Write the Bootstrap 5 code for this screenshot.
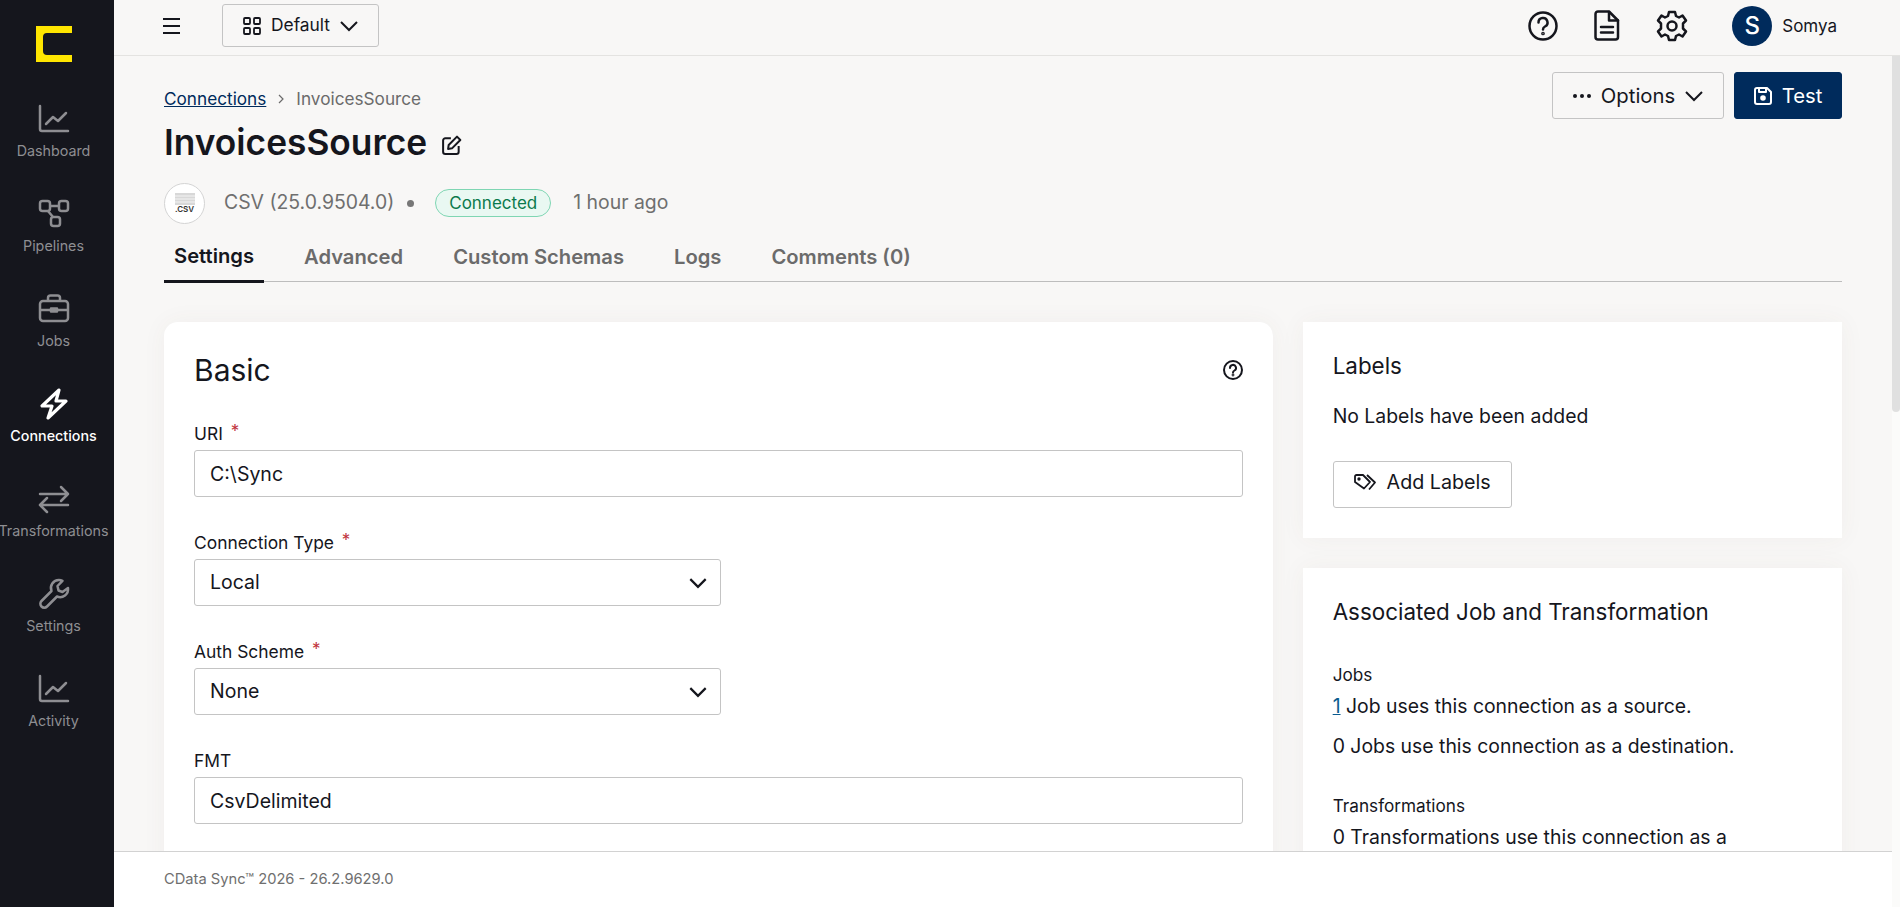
<!DOCTYPE html>
<html lang="en">
<head>
<meta charset="utf-8">
<title>InvoicesSource</title>
<link rel="stylesheet" href="https://cdn.jsdelivr.net/npm/bootstrap@5.3.0/dist/css/bootstrap.min.css">
<style>
body{font-family:Inter,"Noto Sans",sans-serif;background:#f8f7f6;color:#15161d;font-size:17px;overflow:hidden}
svg{display:block;flex:none}
.side-rail{width:114px;background:#15161d;overflow:hidden}
.side-logo{height:87px;margin-bottom:8px;width:107px}
.side-item{height:95px;width:107px;color:#8e8e92;font-size:14.300px;line-height:18px;text-decoration:none;white-space:nowrap;padding-top:8px;gap:7px}
.side-item.is-on{color:#fff;font-weight:500}
.top-bar{height:56px;border-bottom:1px solid #e4e3e1;padding:0 63px 4px 48px}
.view-btn{width:157px;height:43px;margin-left:40px;border:1px solid #c4c4c4;border-radius:3px;font-size:17.400px;gap:10px;background:#f8f7f6;color:#15161d}
.top-icons{gap:36px;margin-right:44px}
.avatar-dot{width:40px;height:40px;background:#002b5c;color:#fff;font-size:24px;font-weight:500}
.user-name{font-size:17px;margin-left:10px;padding-top:2px}
.main-scroll{overflow:hidden;min-width:0}
.rail-track{width:8px;background:#fbfbfa}
.rail-thumb{height:356px;background:#e0e0e0;border-radius:0 0 4px 4px}
.page-wrap{min-height:1961px;padding:29px 50px 0}
.crumbs{font-size:17.200px;color:#6b6b6b;margin:0;height:28px;gap:11px}
.crumbs a{color:#002b5c}
.page-title{font-size:35.300px;font-weight:600;margin:8px 0 0;line-height:44px;gap:15px}
.meta-row{height:50px;margin-top:13px;font-size:19.400px;color:#6f6f6f}
.type-circle{width:41px;height:41px;border:1px solid #d4d4d4;background:#fff;margin-right:19px}
.type-text{font-size:8px;font-weight:600;line-height:8px;color:#333}
.sep-dot{width:7px;height:7px;background:#777;margin:0 21px 0 13px}
.state-pill{border:1px solid #7fd6b3;background:#e9f8f2;color:#0b7a4d;font-size:17px;font-weight:400;height:28px;padding:0 13px;margin-right:22px}
.tab-row{margin-top:4px;border-bottom:1px solid #bdbdbd;gap:30px;height:50px}
.tab-row .nav-link{font-size:20.200px;font-weight:600;color:#6b6b6b;padding:1px 10px 0;height:50px;border:0;border-radius:0;display:flex;align-items:center;background:none}
.tab-row .nav-link.active{color:#15161d;border-bottom:3px solid #15161d;height:51px}
.act-btn{height:47px;border-radius:3px;font-size:20.300px;gap:10px;padding:1px 16px 0}
.act-opt{width:172px;border:1px solid #c4c4c4;color:#15161d;background:#f8f7f6}
.act-test{width:108px;background:#002b5c;color:#fff;border:1px solid #002b5c;margin-left:10px}
.head-block{height:200px}
.head-left{flex:1}
.head-actions{margin-left:-290px;margin-top:-13px}
.pane-row{--bs-gutter-x:30px;margin-top:37px}
.pane{border:0;border-radius:0;background:#fff;padding:30px;box-shadow:0 0 24px rgba(90,80,60,.05)}
.pane-big{border-radius:14px;min-height:1100px}
.pane-title{font-size:30px;font-weight:400;margin:1px 0 0;line-height:34px}
.sub-title{font-size:22.400px;font-weight:400;margin:0;line-height:28px}
.fld{margin-top:36px}
.fld-first{margin-top:37px}
.fld label{font-size:17.400px;line-height:20px;margin-bottom:6px;display:block}
.req{color:#c0313a;margin-left:3px;font-size:17px;vertical-align:3px;line-height:0}
.fld .form-control,.fld .form-select{height:47px;border:1px solid #c4c4c4;border-radius:3px;font-size:19.500px;color:#15161d;padding:0 15px;background-color:#fff;box-shadow:none}
.fld .form-select{width:527px;background-size:22px;background-position:right 11px center;background-image:url("data:image/svg+xml,%3Csvg xmlns='http://www.w3.org/2000/svg' viewBox='0 0 20 20'%3E%3Cpath d='M3 6.500l7 7 7-7' fill='none' stroke='%2315161d' stroke-width='2'/%3E%3C/svg%3E")}
.body-line{font-size:19.400px;margin:0;line-height:26px}
.lead-gap{margin-top:23px}
.wrap-limit{max-width:450px}
.add-btn{width:179px;height:47px;border:1px solid #c4c4c4;border-radius:3px;font-size:19.700px;color:#15161d;gap:10px;background:#fff;margin-top:32px;padding-top:3px}
.mini-head{font-size:17.200px;line-height:20px;margin-bottom:8px}
.mini-next{margin-top:37px}
.line-next{margin-top:14px}
.assoc-title{margin-bottom:39px}
.pane-next{margin-top:30px}
.body-line a{color:#0b5c8f}
.foot-bar{position:sticky;bottom:0;height:56px;background:#fff;border-top:1px solid #d2d2d2;padding-left:50px;font-size:14.700px;color:#6f6f6f}
</style>
</head>
<body>
<div class="d-flex vh-100">
  <nav class="side-rail d-flex flex-column flex-shrink-0">
    <div class="side-logo d-flex align-items-center justify-content-center">
      <svg width="36" height="36" viewBox="0 0 36 36"><path d="M0 0h36v7H11a4 4 0 0 0-4 4v14a4 4 0 0 0 4 4h25v7H0z" fill="#ffe600"/></svg>
    </div>
    <a class="side-item d-flex flex-column align-items-center" href="#">
      <svg width="32" height="32" viewBox="0 0 32 32" fill="none" stroke="currentColor" stroke-width="2.500" stroke-linecap="round" stroke-linejoin="round"><path d="M2 3v23a2 2 0 0 0 2 2h26"/><path d="M8 21l7-7 5 4 8-8"/></svg>
      Dashboard
    </a>
    <a class="side-item d-flex flex-column align-items-center" href="#">
      <svg width="32" height="32" viewBox="0 0 32 32" fill="none" stroke="currentColor" stroke-width="2.500" stroke-linejoin="round"><rect x="2" y="3" width="10" height="10" rx="2.500"/><rect x="21" y="3" width="9" height="10" rx="2.500"/><rect x="13" y="19" width="9" height="9" rx="2.500"/><path d="M12 8h9M10 13l5 6"/></svg>
      Pipelines
    </a>
    <a class="side-item d-flex flex-column align-items-center" href="#">
      <svg width="32" height="32" viewBox="0 0 32 32" fill="none" stroke="currentColor" stroke-width="2.500" stroke-linejoin="round"><rect x="2" y="8" width="28" height="20" rx="3"/><path d="M10 8V5a2.500 2.500 0 0 1 2.500-2.500h7A2.500 2.500 0 0 1 22 5v3M2 17h28"/><rect x="13" y="15.500" width="6" height="3" fill="currentColor"/></svg>
      Jobs
    </a>
    <a class="side-item is-on d-flex flex-column align-items-center" href="#">
      <svg width="32" height="32" viewBox="0 0 32 32" fill="none" stroke="currentColor" stroke-width="3.200" stroke-linejoin="round"><path d="M21 2L4 18h10l-4 12 18-17H18z"/></svg>
      Connections
    </a>
    <a class="side-item d-flex flex-column align-items-center" href="#">
      <svg width="32" height="32" viewBox="0 0 32 32" fill="none" stroke="currentColor" stroke-width="2.500" stroke-linecap="round" stroke-linejoin="round"><path d="M2 11h28M23 4l7 7-7 7"/><path d="M30 22H2M9 15l-7 7 7 7"/></svg>
      Transformations
    </a>
    <a class="side-item d-flex flex-column align-items-center" href="#">
      <svg width="32" height="32" viewBox="0 0 32 32" fill="none" stroke="currentColor" stroke-width="2.500" stroke-linejoin="round"><path d="M21 2a8 8 0 0 0-7.500 11L3.500 23a3.700 3.700 0 0 0 5.500 5.500l10-10A8 8 0 0 0 30 10l-5.500 4-4-1.500-1-4.500 5-5.200A8 8 0 0 0 21 2z"/></svg>
      Settings
    </a>
    <a class="side-item d-flex flex-column align-items-center" href="#">
      <svg width="32" height="32" viewBox="0 0 32 32" fill="none" stroke="currentColor" stroke-width="2.500" stroke-linecap="round" stroke-linejoin="round"><path d="M2 3v23a2 2 0 0 0 2 2h26"/><path d="M8 21l7-7 5 4 8-8"/></svg>
      Activity
    </a>
  </nav>
  <div class="d-flex flex-column flex-grow-1" style="min-width:0">
    <header class="top-bar d-flex align-items-center flex-shrink-0">
      <svg width="20" height="20" viewBox="0 0 20 20" stroke="#15161d" stroke-width="1.800"><path d="M1 3h17M1 10h17M1 17h17"/></svg>
      <button class="view-btn btn d-flex align-items-center justify-content-center p-0" type="button">
        <svg width="18" height="18" viewBox="0 0 18 18" fill="none" stroke="#15161d" stroke-width="1.800"><rect x="1" y="1" width="6" height="6" rx="1"/><rect x="11" y="1" width="6" height="6" rx="1"/><rect x="1" y="11" width="6" height="6" rx="1"/><rect x="11" y="11" width="6" height="6" rx="1"/></svg>
        Default
        <svg width="18" height="18" viewBox="0 0 18 18" fill="none" stroke="#15161d" stroke-width="2"><path d="M1 5l8 8 8-8"/></svg>
      </button>
      <div class="top-icons d-flex align-items-center ms-auto">
        <svg width="30" height="30" viewBox="0 0 30 30" fill="none" stroke="#15161d" stroke-width="2.500" stroke-linecap="round"><circle cx="15" cy="15" r="13.500"/><path d="M10.500 11.500a4.500 4.500 0 1 1 6.500 4c-1.500.8-2 1.500-2 3"/><circle cx="15" cy="22.500" r=".6" fill="#15161d"/></svg>
        <svg width="26" height="31" viewBox="0 0 26 31" fill="none" stroke="#15161d" stroke-width="2.500" stroke-linejoin="round" stroke-linecap="round"><path d="M4 1.500h11l9 9V27a2.500 2.500 0 0 1-2.500 2.500H4A2.500 2.500 0 0 1 1.500 27V4A2.500 2.500 0 0 1 4 1.500z"/><path d="M15 2v8.500h9M7 17h12M7 22.500h12"/></svg>
        <svg width="32" height="32" viewBox="0 0 32 32" fill="none" stroke="#15161d" stroke-width="2.500" stroke-linejoin="round"><circle cx="16" cy="16" r="4.500"/><path d="M13 2h6l1 4 3 1.500 3.500-2 3.500 5-3 3v5l3 3-3.500 5-3.500-2L20 26l-1 4h-6l-1-4-3-1.500-3.500 2-3.500-5 3-3v-5l-3-3 3.500-5 3.500 2L12 6z"/></svg>
      </div>
      <div class="avatar-dot rounded-circle d-flex align-items-center justify-content-center">S</div>
      <span class="user-name">Somya</span>
    </header>
    <div class="d-flex flex-grow-1" style="min-height:0">
    <div class="main-scroll flex-grow-1">
      <div class="page-wrap">
        <div class="head-block d-flex">
          <div class="head-left">
            <div class="crumbs d-flex align-items-center">
              <a href="#">Connections</a>
              <svg width="8" height="10" viewBox="0 0 8 10" fill="none" stroke="#6b6b6b" stroke-width="1.200"><path d="M2 1l4 4-4 4"/></svg>
              <span>InvoicesSource</span>
            </div>
            <h1 class="page-title d-flex align-items-center">InvoicesSource
              <svg class="mt-1" width="20" height="20" viewBox="0 0 18 18" fill="none" stroke="#15161d" stroke-width="1.800" stroke-linejoin="round"><path d="M8 3H3a2 2 0 0 0-2 2v10a2 2 0 0 0 2 2h10a2 2 0 0 0 2-2v-5"/><path d="M13.500 1.500l3 3L9 12l-3.500.5L6 9z"/></svg>
            </h1>
            <div class="meta-row d-flex align-items-center">
              <div class="type-circle rounded-circle d-flex flex-column align-items-center justify-content-center">
                <svg width="20" height="12" viewBox="0 0 20 12"><path d="M0 0h20v12H0z" fill="#d8d8d8"/><path d="M0 3h20M0 6h20M0 9h20" stroke="#f4f4f4"/></svg>
                <span class="type-text">.CSV</span>
              </div>
              <span>CSV (25.0.9504.0)</span>
              <span class="sep-dot rounded-circle"></span>
              <span class="state-pill badge rounded-pill d-flex align-items-center">Connected</span>
              <span>1 hour ago</span>
            </div>
            <ul class="tab-row nav" style="width:1678px">
              <li class="nav-item"><a class="nav-link active" href="#">Settings</a></li>
              <li class="nav-item"><a class="nav-link" href="#">Advanced</a></li>
              <li class="nav-item"><a class="nav-link" href="#">Custom Schemas</a></li>
              <li class="nav-item"><a class="nav-link" href="#">Logs</a></li>
              <li class="nav-item"><a class="nav-link" href="#">Comments (0)</a></li>
            </ul>
          </div>
          <div class="head-actions d-flex align-items-start flex-shrink-0">
            <button class="act-btn act-opt btn d-flex align-items-center justify-content-center" type="button">
              <svg width="18" height="4" viewBox="0 0 18 4" fill="#15161d"><circle cx="2" cy="2" r="2"/><circle cx="9" cy="2" r="2"/><circle cx="16" cy="2" r="2"/></svg>
              Options
              <svg width="18" height="18" viewBox="0 0 18 18" fill="none" stroke="#15161d" stroke-width="2"><path d="M1 5l8 8 8-8"/></svg>
            </button>
            <button class="act-btn act-test btn d-flex align-items-center justify-content-center" type="button">
              <svg width="18" height="18" viewBox="0 0 18 18" fill="none" stroke="#fff" stroke-width="2" stroke-linejoin="round"><path d="M1 3a2 2 0 0 1 2-2h10l4 4v10a2 2 0 0 1-2 2H3a2 2 0 0 1-2-2z"/><path d="M5 1v4h7V1"/><circle cx="9" cy="11" r="1.800" fill="#fff"/></svg>
              Test
            </button>
          </div>
        </div>
        <div class="row pane-row">
          <div class="col-8">
            <section class="card pane pane-big">
              <div class="d-flex align-items-center justify-content-between">
                <h2 class="pane-title">Basic</h2>
                <svg width="20" height="20" viewBox="0 0 20 20" fill="none" stroke="#15161d" stroke-width="2" stroke-linecap="round"><circle cx="10" cy="10" r="9"/><path d="M7 8a3 3 0 1 1 4.500 2.500c-1 .6-1.500 1-1.500 2"/><circle cx="10" cy="15" r=".4" fill="#15161d"/></svg>
              </div>
              <div class="fld fld-first"><label for="f1">URI <span class="req">*</span></label><input id="f1" class="form-control" value="C:\Sync"></div>
              <div class="fld"><label for="f2">Connection Type <span class="req">*</span></label><select id="f2" class="form-select"><option>Local</option></select></div>
              <div class="fld"><label for="f3">Auth Scheme <span class="req">*</span></label><select id="f3" class="form-select"><option>None</option></select></div>
              <div class="fld"><label for="f4">FMT</label><input id="f4" class="form-control" value="CsvDelimited"></div>
            </section>
          </div>
          <div class="col-4">
            <section class="card pane">
              <h3 class="sub-title">Labels</h3>
              <p class="body-line lead-gap">No Labels have been added</p>
              <button class="add-btn btn d-flex align-items-center justify-content-center" type="button">
                <svg width="23" height="18" viewBox="0 0 23 18" fill="none" stroke="#15161d" stroke-width="1.800" stroke-linejoin="round"><path d="M1 2.500A1.500 1.500 0 0 1 2.500 1H9l7 7-6 6.500L1 8z"/><path d="M13 1l8 7.500-6 7"/><circle cx="5" cy="5" r=".8" fill="#15161d"/></svg>
                Add Labels
              </button>
            </section>
            <section class="card pane pane-next">
              <h3 class="sub-title assoc-title">Associated Job and Transformation</h3>
              <div class="mini-head">Jobs</div>
              <p class="body-line"><a href="#">1</a> Job uses this connection as a source.</p>
              <p class="body-line line-next">0 Jobs use this connection as a destination.</p>
              <div class="mini-head mini-next">Transformations</div>
              <p class="body-line wrap-limit">0 Transformations use this connection as a source.</p>
            </section>
          </div>
        </div>
      </div>
      <footer class="foot-bar d-flex align-items-center">CData Sync™ 2026 - 26.2.9629.0</footer>
    </div>
    <div class="rail-track flex-shrink-0"><div class="rail-thumb"></div></div>
    </div>
  </div>
</div>
<script src="https://cdn.jsdelivr.net/npm/bootstrap@5.3.0/dist/js/bootstrap.bundle.min.js"></script>
</body>
</html>
